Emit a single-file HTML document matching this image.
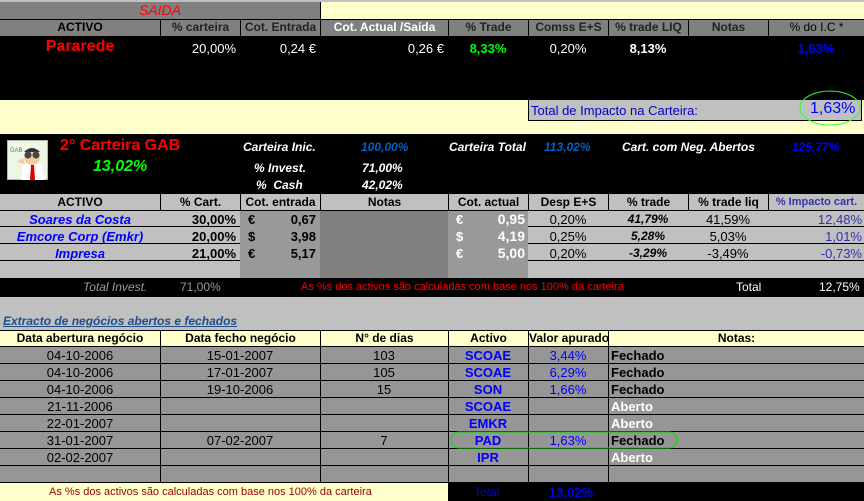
<!DOCTYPE html>
<html><head><meta charset="utf-8"><style>
*{margin:0;padding:0;box-sizing:border-box}
body{width:864px;height:501px;overflow:hidden;background:#c0c0c0;position:relative;font-family:"Liberation Sans",Arial,sans-serif;font-size:12px}
.b{position:absolute}
.c{position:absolute;white-space:nowrap;overflow:hidden;line-height:17px;height:17px}
.h{font-weight:bold;text-align:center;color:#000}
.bl{border-left:1px solid #000}
.bb{border-bottom:1px solid #000}
.r{text-align:right;padding-right:4px}
.ce{text-align:center}
.bo{font-weight:bold}
.it{font-style:italic}
</style></head><body>
<div class="b" style="left:0;top:0;width:864px;height:2px;background:#c0c0c0"></div>
<div class="b" style="left:0;top:2px;width:320px;height:17px;background:#808080"></div>
<div class="b" style="left:320px;top:2px;width:544px;height:17px;background:#ffffcc;border-left:1px solid #000"></div>
<div class="c ce it" style="left:0;top:2px;width:320px;color:#f00;font-size:14px">SAIDA</div>
<div class="b" style="left:0;top:19px;width:864px;height:17px;background:#808080;border-top:1px solid #000"></div>
<div class="c h" style="left:0;top:19px;width:160px;color:#000">ACTIVO</div>
<div class="c h bl" style="left:160px;top:19px;width:80px;color:#222">% carteira</div>
<div class="c h bl" style="left:240px;top:19px;width:80px;color:#222">Cot. Entrada</div>
<div class="c h bl" style="left:320px;top:19px;width:128px;color:#fff">Cot. Actual /Saída</div>
<div class="c h bl" style="left:448px;top:19px;width:80px;color:#222">% Trade</div>
<div class="c h bl" style="left:528px;top:19px;width:80px;color:#222">Comss E+S</div>
<div class="c h bl" style="left:608px;top:19px;width:80px;color:#222">% trade LIQ</div>
<div class="c h bl" style="left:688px;top:19px;width:80px;color:#222">Notas</div>
<div class="c h bl" style="left:768px;top:19px;width:96px;color:#000;font-weight:normal">% do I.C *</div>
<div class="b" style="left:0;top:36px;width:864px;height:64px;background:#000"></div>
<div class="c ce bo" style="left:0;top:38px;width:160px;color:#f00;font-size:16px;line-height:18px;height:20px">Pararede</div>
<div class="c r" style="left:160px;top:40px;width:80px;color:#fff;font-size:13px">20,00%</div>
<div class="c r" style="left:240px;top:40px;width:80px;color:#fff;font-size:13px">0,24 €</div>
<div class="c r" style="left:320px;top:40px;width:128px;color:#fff;font-size:13px">0,26 €</div>
<div class="c ce bo" style="left:448px;top:40px;width:80px;color:#0f0;font-size:13px">8,33%</div>
<div class="c ce" style="left:528px;top:40px;width:80px;color:#fff;font-size:13px">0,20%</div>
<div class="c ce bo" style="left:608px;top:40px;width:80px;color:#fff;font-size:13px">8,13%</div>
<div class="c ce bo" style="left:768px;top:40px;width:96px;color:#00f;font-size:13px">1,63%</div>
<div class="b" style="left:0;top:100px;width:864px;height:34px;background:#ffffcc"></div>
<div class="b" style="left:528px;top:100px;width:334px;height:21px;background:#c0c0c0;border:1px solid #000;border-top:none"></div>
<div class="c" style="left:531px;top:102px;color:#00c;font-size:13px">Total de Impacto na Carteira:</div>
<div class="c" style="left:810px;top:99px;color:#00f;font-size:16px;line-height:20px;height:20px">1,63%</div>
<svg class="b" style="left:798px;top:89px" width="66" height="40"><ellipse cx="32" cy="19" rx="30" ry="17" fill="none" stroke="#3f3" stroke-width="1"/></svg>
<div class="b" style="left:0;top:134px;width:864px;height:60px;background:#000"></div>
<svg class="b" style="left:7px;top:140px" width="41" height="40"><rect width="41" height="40" fill="#eef6e6"/><rect x="0" y="0" width="41" height="40" fill="none" stroke="#777"/><text x="3" y="12" font-size="6" fill="#393" font-family="Liberation Sans">GAB</text><path d="M14 40 L16 24 L34 24 L38 40Z" fill="#fff"/><path d="M24 25 L27 25 L28 40 L23 40Z" fill="#d00"/><ellipse cx="25" cy="17" rx="8" ry="8" fill="#f2c9a0"/><path d="M17 12 Q25 4 33 12" fill="#333"/><circle cx="21" cy="15" r="3.5" fill="#444"/><circle cx="29" cy="15" r="3.5" fill="#444"/><path d="M10 22 L16 18 L18 24Z" fill="#f2c9a0"/></svg>
<div class="c bo" style="left:60px;top:137px;color:#f00;font-size:16px;line-height:18px;height:20px">2° Carteira GAB</div>
<div class="c bo it" style="left:93px;top:158px;color:#0f0;font-size:16px;line-height:18px;height:20px">13,02%</div>
<div class="c bo it" style="left:243px;top:139px;color:#fff">Carteira Inic.</div>
<div class="c bo it" style="left:361px;top:139px;color:#0060c0">100,00%</div>
<div class="c bo it" style="left:254px;top:160px;color:#fff">% Invest.</div>
<div class="c bo it" style="left:362px;top:160px;color:#fff">71,00%</div>
<div class="c bo it" style="left:256px;top:177px;color:#fff">%&nbsp; Cash</div>
<div class="c bo it" style="left:362px;top:177px;color:#fff">42,02%</div>
<div class="c bo it" style="left:449px;top:139px;color:#fff">Carteira Total</div>
<div class="c bo it" style="left:544px;top:139px;color:#0060c0">113,02%</div>
<div class="c bo it" style="left:622px;top:139px;color:#fff">Cart. com Neg. Abertos</div>
<div class="c bo it" style="left:792px;top:139px;color:#00f">125,77%</div>
<div class="b" style="left:0;top:194px;width:864px;height:17px;background:#c0c0c0;border-bottom:1px solid #000"></div>
<div class="c h" style="left:0;top:194px;width:160px">ACTIVO</div>
<div class="c h bl" style="left:160px;top:194px;width:80px">% Cart.</div>
<div class="c h bl" style="left:240px;top:194px;width:80px">Cot. entrada</div>
<div class="c h bl" style="left:320px;top:194px;width:128px">Notas</div>
<div class="c h bl" style="left:448px;top:194px;width:80px">Cot. actual</div>
<div class="c h bl" style="left:528px;top:194px;width:80px">Desp E+S</div>
<div class="c h bl" style="left:608px;top:194px;width:80px">% trade</div>
<div class="c h bl" style="left:688px;top:194px;width:80px">% trade liq</div>
<div class="c h bl" style="left:768px;top:194px;width:96px;color:#33a;font-size:11px">% Impacto cart.</div>
<div class="b" style="left:240px;top:211px;width:80px;height:67px;background:#999"></div>
<div class="b" style="left:320px;top:211px;width:128px;height:67px;background:#808080"></div>
<div class="b" style="left:448px;top:211px;width:80px;height:67px;background:#999"></div>
<div class="b bb" style="left:0;top:210px;width:240px;height:17px"></div><div class="b bb" style="left:528px;top:210px;width:336px;height:17px"></div>
<div class="b bb" style="left:0;top:227px;width:240px;height:17px"></div><div class="b bb" style="left:528px;top:227px;width:336px;height:17px"></div>
<div class="b bb" style="left:0;top:244px;width:240px;height:17px"></div><div class="b bb" style="left:528px;top:244px;width:336px;height:17px"></div>
<div class="c ce bo it" style="left:0;top:211px;width:160px;color:#00f;font-size:13px">Soares da Costa</div>
<div class="c ce bo it" style="left:0;top:228px;width:160px;color:#00f;font-size:13px">Emcore Corp (Emkr)</div>
<div class="c ce bo it" style="left:0;top:245px;width:160px;color:#00f;font-size:13px">Impresa</div>
<div class="c r bo" style="left:160px;top:211px;width:80px;font-size:13px">30,00%</div>
<div class="c r bo" style="left:160px;top:228px;width:80px;font-size:13px">20,00%</div>
<div class="c r bo" style="left:160px;top:245px;width:80px;font-size:13px">21,00%</div>
<div class="c bo" style="left:248px;top:211px;font-size:13px">€</div><div class="c r bo" style="left:240px;top:211px;width:80px;font-size:13px">0,67</div>
<div class="c bo" style="left:248px;top:228px;font-size:13px">$</div><div class="c r bo" style="left:240px;top:228px;width:80px;font-size:13px">3,98</div>
<div class="c bo" style="left:248px;top:245px;font-size:13px">€</div><div class="c r bo" style="left:240px;top:245px;width:80px;font-size:13px">5,17</div>
<div class="c bo" style="left:456px;top:211px;color:#fff;font-size:13px">€</div><div class="c r bo" style="left:448px;top:211px;width:80px;color:#fff;font-size:14px;padding-right:3px">0,95</div>
<div class="c bo" style="left:456px;top:228px;color:#fff;font-size:13px">$</div><div class="c r bo" style="left:448px;top:228px;width:80px;color:#fff;font-size:14px;padding-right:3px">4,19</div>
<div class="c bo" style="left:456px;top:245px;color:#fff;font-size:13px">€</div><div class="c r bo" style="left:448px;top:245px;width:80px;color:#fff;font-size:14px;padding-right:3px">5,00</div>
<div class="c ce" style="left:528px;top:211px;width:80px;font-size:13px">0,20%</div>
<div class="c ce" style="left:528px;top:228px;width:80px;font-size:13px">0,25%</div>
<div class="c ce" style="left:528px;top:245px;width:80px;font-size:13px">0,20%</div>
<div class="c ce bo it" style="left:608px;top:211px;width:80px">41,79%</div>
<div class="c ce bo it" style="left:608px;top:228px;width:80px">5,28%</div>
<div class="c ce bo it" style="left:608px;top:245px;width:80px">-3,29%</div>
<div class="c ce" style="left:688px;top:211px;width:80px;font-size:13px">41,59%</div>
<div class="c ce" style="left:688px;top:228px;width:80px;font-size:13px">5,03%</div>
<div class="c ce" style="left:688px;top:245px;width:80px;font-size:13px">-3,49%</div>
<div class="c r" style="left:768px;top:211px;width:96px;color:#33a;font-size:13px;padding-right:2px">12,48%</div>
<div class="c r" style="left:768px;top:228px;width:96px;color:#33a;font-size:13px;padding-right:2px">1,01%</div>
<div class="c r" style="left:768px;top:245px;width:96px;color:#33a;font-size:13px;padding-right:2px">-0,73%</div>
<div class="b" style="left:0;top:278px;width:864px;height:19px;background:#000"></div>
<div class="c it" style="left:83px;top:279px;color:#999;font-size:12px">Total Invest.</div>
<div class="c" style="left:180px;top:279px;color:#999;font-size:12px">71,00%</div>
<div class="c" style="left:301px;top:279px;color:#f00;font-size:11px">As %s dos activos são calculadas com base nos 100% da carteira</div>
<div class="c" style="left:736px;top:279px;color:#fff;font-size:12px">Total</div>
<div class="c" style="left:819px;top:279px;color:#fff;font-size:12px">12,75%</div>
<div class="c bo it" style="left:3px;top:313px;color:#1f4e8c;text-decoration:underline;font-size:12px">Extracto de negócios abertos e fechados</div>
<div class="b" style="left:0;top:330px;width:864px;height:17px;background:#ffffcc;border-top:1px solid #000;border-bottom:1px solid #000"></div>
<div class="c h" style="left:0;top:330px;width:160px">Data abertura negócio</div>
<div class="c h bl" style="left:160px;top:330px;width:160px">Data fecho negócio</div>
<div class="c h bl" style="left:320px;top:330px;width:128px">N° de dias</div>
<div class="c h bl" style="left:448px;top:330px;width:80px">Activo</div>
<div class="c h bl" style="left:528px;top:330px;width:80px">Valor apurado</div>
<div class="c h bl" style="left:608px;top:330px;width:256px">Notas:</div>
<div class="b" style="left:0;top:347px;width:864px;height:136px;background:#969696"></div>
<div class="b" style="left:160px;top:347px;width:1px;height:136px;background:#000"></div>
<div class="b" style="left:320px;top:347px;width:1px;height:136px;background:#000"></div>
<div class="b" style="left:448px;top:347px;width:1px;height:154px;background:#000"></div>
<div class="b" style="left:528px;top:347px;width:1px;height:136px;background:#000"></div>
<div class="b" style="left:608px;top:347px;width:1px;height:136px;background:#000"></div>
<div class="b" style="left:0;top:363px;width:864px;height:1px;background:#000"></div>
<div class="b" style="left:0;top:380px;width:864px;height:1px;background:#000"></div>
<div class="b" style="left:0;top:397px;width:864px;height:1px;background:#000"></div>
<div class="b" style="left:0;top:414px;width:864px;height:1px;background:#000"></div>
<div class="b" style="left:0;top:431px;width:864px;height:1px;background:#000"></div>
<div class="b" style="left:0;top:448px;width:864px;height:1px;background:#000"></div>
<div class="b" style="left:0;top:465px;width:864px;height:1px;background:#000"></div>
<div class="b" style="left:0;top:482px;width:864px;height:1px;background:#000"></div>
<div class="c ce" style="left:0;top:347px;width:160px;font-size:13px">04-10-2006</div>
<div class="c ce" style="left:0;top:364px;width:160px;font-size:13px">04-10-2006</div>
<div class="c ce" style="left:0;top:381px;width:160px;font-size:13px">04-10-2006</div>
<div class="c ce" style="left:0;top:398px;width:160px;font-size:13px">21-11-2006</div>
<div class="c ce" style="left:0;top:415px;width:160px;font-size:13px">22-01-2007</div>
<div class="c ce" style="left:0;top:432px;width:160px;font-size:13px">31-01-2007</div>
<div class="c ce" style="left:0;top:449px;width:160px;font-size:13px">02-02-2007</div>
<div class="c ce" style="left:160px;top:347px;width:160px;font-size:13px">15-01-2007</div>
<div class="c ce" style="left:160px;top:364px;width:160px;font-size:13px">17-01-2007</div>
<div class="c ce" style="left:160px;top:381px;width:160px;font-size:13px">19-10-2006</div>
<div class="c ce" style="left:160px;top:432px;width:160px;font-size:13px">07-02-2007</div>
<div class="c ce" style="left:320px;top:347px;width:128px;font-size:13px">103</div>
<div class="c ce" style="left:320px;top:364px;width:128px;font-size:13px">105</div>
<div class="c ce" style="left:320px;top:381px;width:128px;font-size:13px">15</div>
<div class="c ce" style="left:320px;top:432px;width:128px;font-size:13px">7</div>
<div class="c ce bo" style="left:448px;top:347px;width:80px;color:#00f;font-size:13px">SCOAE</div>
<div class="c ce bo" style="left:448px;top:364px;width:80px;color:#00f;font-size:13px">SCOAE</div>
<div class="c ce bo" style="left:448px;top:381px;width:80px;color:#00f;font-size:13px">SON</div>
<div class="c ce bo" style="left:448px;top:398px;width:80px;color:#00f;font-size:13px">SCOAE</div>
<div class="c ce bo" style="left:448px;top:415px;width:80px;color:#00f;font-size:13px">EMKR</div>
<div class="c ce bo" style="left:448px;top:432px;width:80px;color:#00f;font-size:13px">PAD</div>
<div class="c ce bo" style="left:448px;top:449px;width:80px;color:#00f;font-size:13px">IPR</div>
<div class="c ce" style="left:528px;top:347px;width:80px;color:#00f;font-size:13px">3,44%</div>
<div class="c ce" style="left:528px;top:364px;width:80px;color:#00f;font-size:13px">6,29%</div>
<div class="c ce" style="left:528px;top:381px;width:80px;color:#00f;font-size:13px">1,66%</div>
<div class="c ce" style="left:528px;top:432px;width:80px;color:#00f;font-size:13px">1,63%</div>
<div class="c bo" style="left:611px;top:347px;font-size:13px">Fechado</div>
<div class="c bo" style="left:611px;top:364px;font-size:13px">Fechado</div>
<div class="c bo" style="left:611px;top:381px;font-size:13px">Fechado</div>
<div class="c bo" style="left:611px;top:398px;font-size:13px;color:#fff">Aberto</div>
<div class="c bo" style="left:611px;top:415px;font-size:13px;color:#fff">Aberto</div>
<div class="c bo" style="left:611px;top:432px;font-size:13px">Fechado</div>
<div class="c bo" style="left:611px;top:449px;font-size:13px;color:#fff">Aberto</div>
<svg class="b" style="left:450px;top:431px" width="230" height="19"><rect x="1" y="1" width="226" height="16" rx="8" ry="8" fill="none" stroke="#0d0" stroke-width="1"/></svg>
<div class="b" style="left:0;top:483px;width:448px;height:18px;background:#ffffcc"></div>
<div class="c" style="left:49px;top:484px;color:#900;font-size:11px">As %s dos activos são calculadas com base nos 100% da carteira</div>
<div class="b" style="left:449px;top:483px;width:415px;height:18px;background:#000"></div>
<div class="c" style="left:474px;top:484px;color:#00c;font-size:12px">Total</div>
<div class="c bo" style="left:549px;top:484px;color:#00f;font-size:13px">13,02%</div>
</body></html>
